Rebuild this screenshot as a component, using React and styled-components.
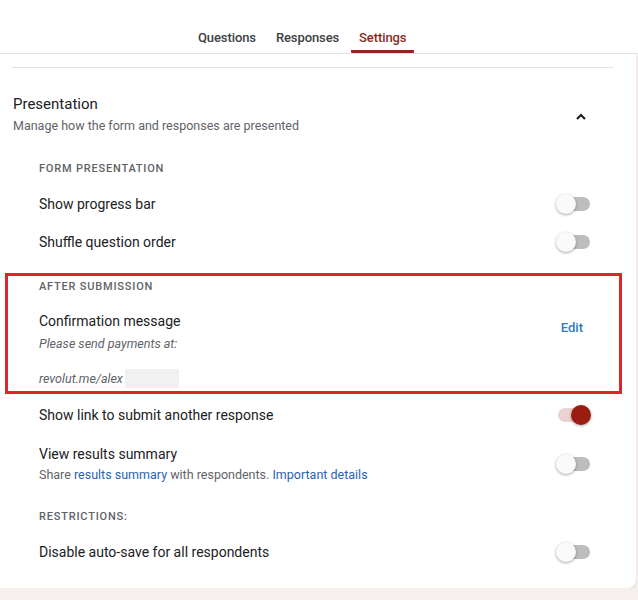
import React from 'react'
import styled, { createGlobalStyle } from 'styled-components';

const GlobalStyle = createGlobalStyle`
  html, body {
    margin: 0;
    padding: 0;
    background: #f5f0ee;
    font-family: Roboto, 'Liberation Sans', Arial, sans-serif;
    color: #202124;
  }
  * { box-sizing: border-box; }
`;

const Switch = ({ on }) => (
    <Track $on={on}>
        <Thumb $on={on} />
    </Track>
)

const ChevronUp = () => (
    <svg width="14" height="14" viewBox="0 0 14 14">
        <path d="M3 9 L7 5 L11 9" fill="none" stroke="#202124" strokeWidth="2.2" />
    </svg>
)

const Setting = ({ title, children, right, tall }) => (
    <Row $tall={tall}>
        <RowText>
            <RowTitle>{title}</RowTitle>
            {children}
        </RowText>
        {right}
    </Row>
)

export default function App() {
    return (
        <>
            <GlobalStyle />
            <Header>
                <Tabs>
                    <Tab>Questions</Tab>
                    <Tab>Responses</Tab>
                    <Tab $active>Settings</Tab>
                </Tabs>
            </Header>
            <Card>
                <Divider />
                <SectionHead>
                    <div>
                        <SectionTitle>Presentation</SectionTitle>
                        <SectionSub>Manage how the form and responses are presented</SectionSub>
                    </div>
                    <Collapse><ChevronUp /></Collapse>
                </SectionHead>
                <SectionBody>
                    <Group>
                        <GroupLabel>Form presentation</GroupLabel>
                        <Setting title="Show progress bar" right={<Switch />} />
                        <Setting title="Shuffle question order" right={<Switch />} />
                    </Group>
                    <Group $highlight>
                        <GroupLabel>After submission</GroupLabel>
                        <Confirm>
                            <RowText>
                                <RowTitle>Confirmation message</RowTitle>
                                <Message>
                                    Please send payments at:{'\n\n'}revolut.me/alex<Redacted />
                                </Message>
                            </RowText>
                            <EditButton>Edit</EditButton>
                        </Confirm>
                    </Group>
                    <Group $flush>
                        <Setting title="Show link to submit another response" right={<Switch on />} />
                        <Setting tall title="View results summary" right={<Switch />}>
                            <RowSub>
                                Share <Link>results summary</Link> with respondents. <Link>Important details</Link>
                            </RowSub>
                        </Setting>
                    </Group>
                    <Group $spaced>
                        <GroupLabel>Restrictions:</GroupLabel>
                        <Setting title="Disable auto-save for all respondents" right={<Switch />} />
                    </Group>
                </SectionBody>
            </Card>
        </>
    )
}

const Header = styled.header`
    background: #fff;
    height: 54px;
    border-bottom: 1px solid #e4e4e4;
    display: flex;
    align-items: flex-end;
`;

const Tabs = styled.nav`
    display: flex;
    gap: 4px;
    padding-left: 190px;
`;

const Tab = styled.div`
    height: 35px;
    padding: 6px 8px 0;
    display: flex;
    align-items: center;
    font-size: 13px;
    font-weight: 500;
    letter-spacing: -0.1px;
    line-height: 1;
    color: ${p => p.$active ? '#8a2a1e' : '#3c4043'};
    border-bottom: 3px solid ${p => p.$active ? '#8a2a1e' : 'transparent'};
    border-radius: 0 0 1px 1px;
`;

const Card = styled.main`
    background: #fff;
    padding: 13px 22px 17px 12px;
    border-bottom-right-radius: 8px;
    margin-right: 2px;
    box-shadow: 0 1px 2px rgba(0, 0, 0, 0.12);
`;

const Divider = styled.hr`
    margin: 0;
    border: 0;
    border-top: 1px solid #e3e3e3;
`;

const SectionHead = styled.div`
    display: flex;
    align-items: center;
    justify-content: space-between;
    padding: 26px 0 0 1px;
`;

const SectionTitle = styled.div`
    font-size: 15px;
    line-height: 20px;
    color: #202124;
`;

const SectionSub = styled.div`
    margin-top: 3px;
    font-size: 12.5px;
    line-height: 18px;
    color: #5f6368;
`;

const Collapse = styled.div`
    width: 20px;
    height: 20px;
    margin-right: 23px;
    margin-top: 4px;
    display: flex;
    align-items: center;
    justify-content: center;
`;

const SectionBody = styled.div`
    padding: 0 24px 0 27px;
`;

const Group = styled.section`
    padding-top: ${p => p.$flush ? '0' : p.$spaced ? '18px' : '26px'};
    ${p => p.$highlight && `
        margin: 12px -32px 2px -34px;
        padding: 3px 29px 3px 31px;
        border: 3px solid #e0242c;
    `}
`;

const GroupLabel = styled.div`
    font-size: 11px;
    font-weight: 500;
    line-height: 16px;
    letter-spacing: 0.8px;
    text-transform: uppercase;
    color: #5f6368;
    margin-bottom: 8px;
`;

const Row = styled.div`
    display: flex;
    align-items: center;
    justify-content: space-between;
    min-height: 38px;
    padding: ${p => p.$tall ? '10px 0 7px' : '0'};
`;

const RowText = styled.div`
    display: flex;
    flex-direction: column;
`;

const RowTitle = styled.div`
    font-size: 14px;
    line-height: 20px;
    color: #202124;
`;

const RowSub = styled.div`
    margin-top: 2px;
    font-size: 12.5px;
    line-height: 18px;
    color: #5f6368;
`;

const Link = styled.a`
    color: #2a63b3;
    text-decoration: none;
`;

const Confirm = styled.div`
    display: flex;
    justify-content: space-between;
    align-items: flex-start;
    padding-top: 8px;
`;

const Message = styled.div`
    margin-top: 4px;
    font-size: 12.5px;
    line-height: 17px;
    font-style: italic;
    color: #5f6368;
    white-space: pre-line;
`;

const Redacted = styled.span`
    display: inline-block;
    width: 54px;
    height: 19px;
    margin-left: 2px;
    vertical-align: -5px;
    background: #f1f1f1;
`;

const EditButton = styled.button`
    margin-top: 9px;
    padding: 0 7px 0 0;
    border: 0;
    background: transparent;
    font-family: inherit;
    font-size: 13px;
    font-weight: 500;
    color: #2b7bc9;
    cursor: pointer;
`;

const Track = styled.span`
    position: relative;
    flex: none;
    width: 32px;
    height: 14px;
    border-radius: 7px;
    background: ${p => p.$on ? '#ead3d1' : '#bdbdbd'};
`;

const Thumb = styled.span`
    position: absolute;
    top: -3px;
    left: ${p => p.$on ? '13px' : '-2px'};
    width: 20px;
    height: 20px;
    border-radius: 50%;
    background: ${p => p.$on ? '#9b1c10' : '#fafafa'};
    box-shadow: 0 1px 3px rgba(0, 0, 0, 0.35);
`;
